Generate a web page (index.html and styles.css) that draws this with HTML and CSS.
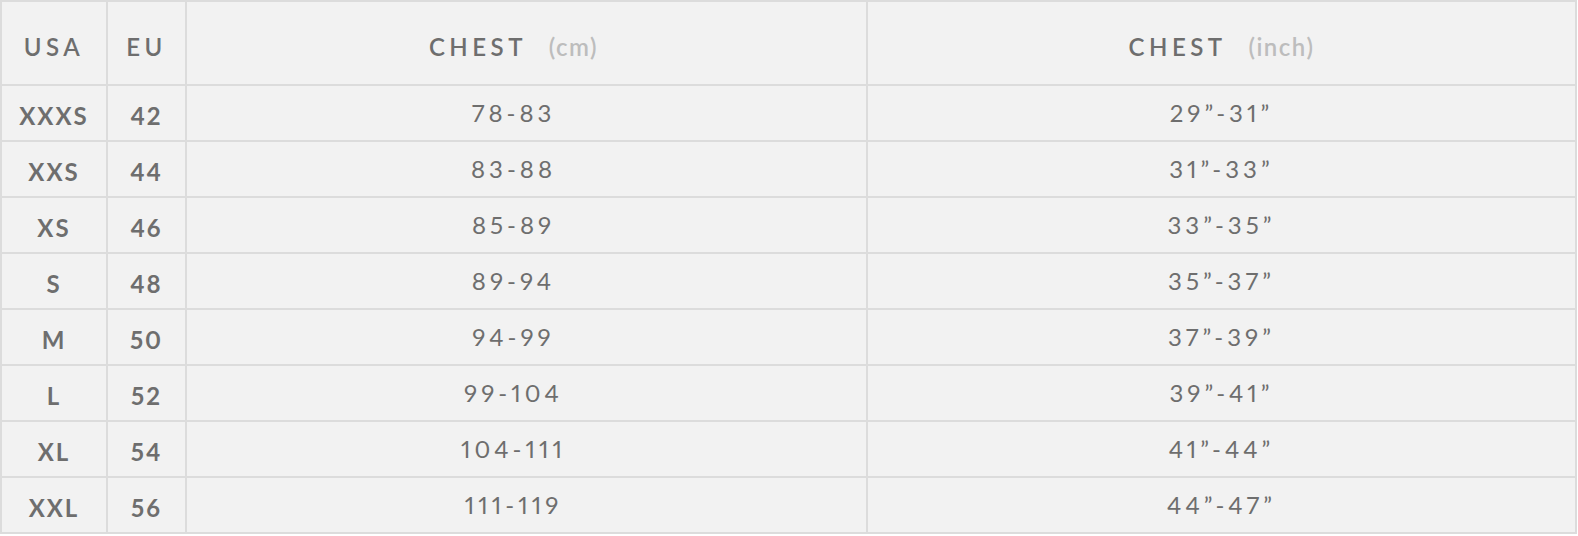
FILE: index.html
```html
<!DOCTYPE html>
<html>
<head>
<meta charset="utf-8">
<link rel="stylesheet" href="styles.css">
</head>
<body>
<table class="size-table">
  <colgroup>
    <col class="c-usa">
    <col class="c-eu">
    <col class="c-cm">
    <col class="c-in">
  </colgroup>
  <thead>
    <tr>
      <th class="h-size">USA</th>
      <th class="h-size">EU</th>
      <th class="h-chest cm">CHEST <span class="unit">(cm)</span></th>
      <th class="h-chest">CHEST <span class="unit">(inch)</span></th>
    </tr>
  </thead>
  <tbody>
    <tr><td class="size">XXXS</td><td class="size">42</td><td class="val cm">78-83</td><td class="val">29”-31”</td></tr>
    <tr><td class="size">XXS</td><td class="size">44</td><td class="val cm">83-88</td><td class="val">31”-33”</td></tr>
    <tr><td class="size">XS</td><td class="size">46</td><td class="val cm">85-89</td><td class="val">33”-35”</td></tr>
    <tr><td class="size">S</td><td class="size">48</td><td class="val cm">89-94</td><td class="val">35”-37”</td></tr>
    <tr><td class="size">M</td><td class="size">50</td><td class="val cm">94-99</td><td class="val">37”-39”</td></tr>
    <tr><td class="size">L</td><td class="size">52</td><td class="val cm">99-104</td><td class="val">39”-41”</td></tr>
    <tr><td class="size">XL</td><td class="size">54</td><td class="val cm">104-111</td><td class="val">41”-44”</td></tr>
    <tr><td class="size">XXL</td><td class="size">56</td><td class="val cm">111-119</td><td class="val">44”-47”</td></tr>
  </tbody>
</table>
</body>
</html>
```

FILE: styles.css
```css
html, body {
  margin: 0;
  padding: 0;
  background: #ffffff;
}

.size-table {
  table-layout: fixed;
  border-collapse: separate;
  border-spacing: 0;
  width: 1577px;
  background: #f2f2f2;
  border-top: 2px solid #dcdcdc;
  border-left: 2px solid #dcdcdc;
  font-family: Lato, "Open Sans", sans-serif;
  font-variant-numeric: proportional-nums;
  color: #6e6e6e;
}

.c-usa { width: 106px; }
.c-eu { width: 79px; }
.c-cm { width: 681px; }
.c-in { width: 709px; }

.size-table th,
.size-table td {
  box-sizing: border-box;
  border-right: 2px solid #dcdcdc;
  border-bottom: 2px solid #dcdcdc;
  text-align: center;
  vertical-align: middle;
  padding: 0;
  line-height: 1;
  white-space: nowrap;
}

.size-table th {
  height: 84px;
  padding-top: 8px;
  font-size: 24px;
  font-weight: 600;
  letter-spacing: 4.5px;
}

.size-table td {
  height: 56px;
}

.unit {
  margin-left: 12px;
  color: #bdbdbd;
  font-size: 24px;
  font-weight: 600;
  letter-spacing: 1.5px;
}

.size {
  font-size: 24px;
  font-weight: 700;
  letter-spacing: 2px;
  padding-top: 6px !important;
}

.val {
  font-size: 24px;
  font-weight: 400;
  letter-spacing: 4px;
}

.cm {
  padding-right: 26px !important;
}
```
